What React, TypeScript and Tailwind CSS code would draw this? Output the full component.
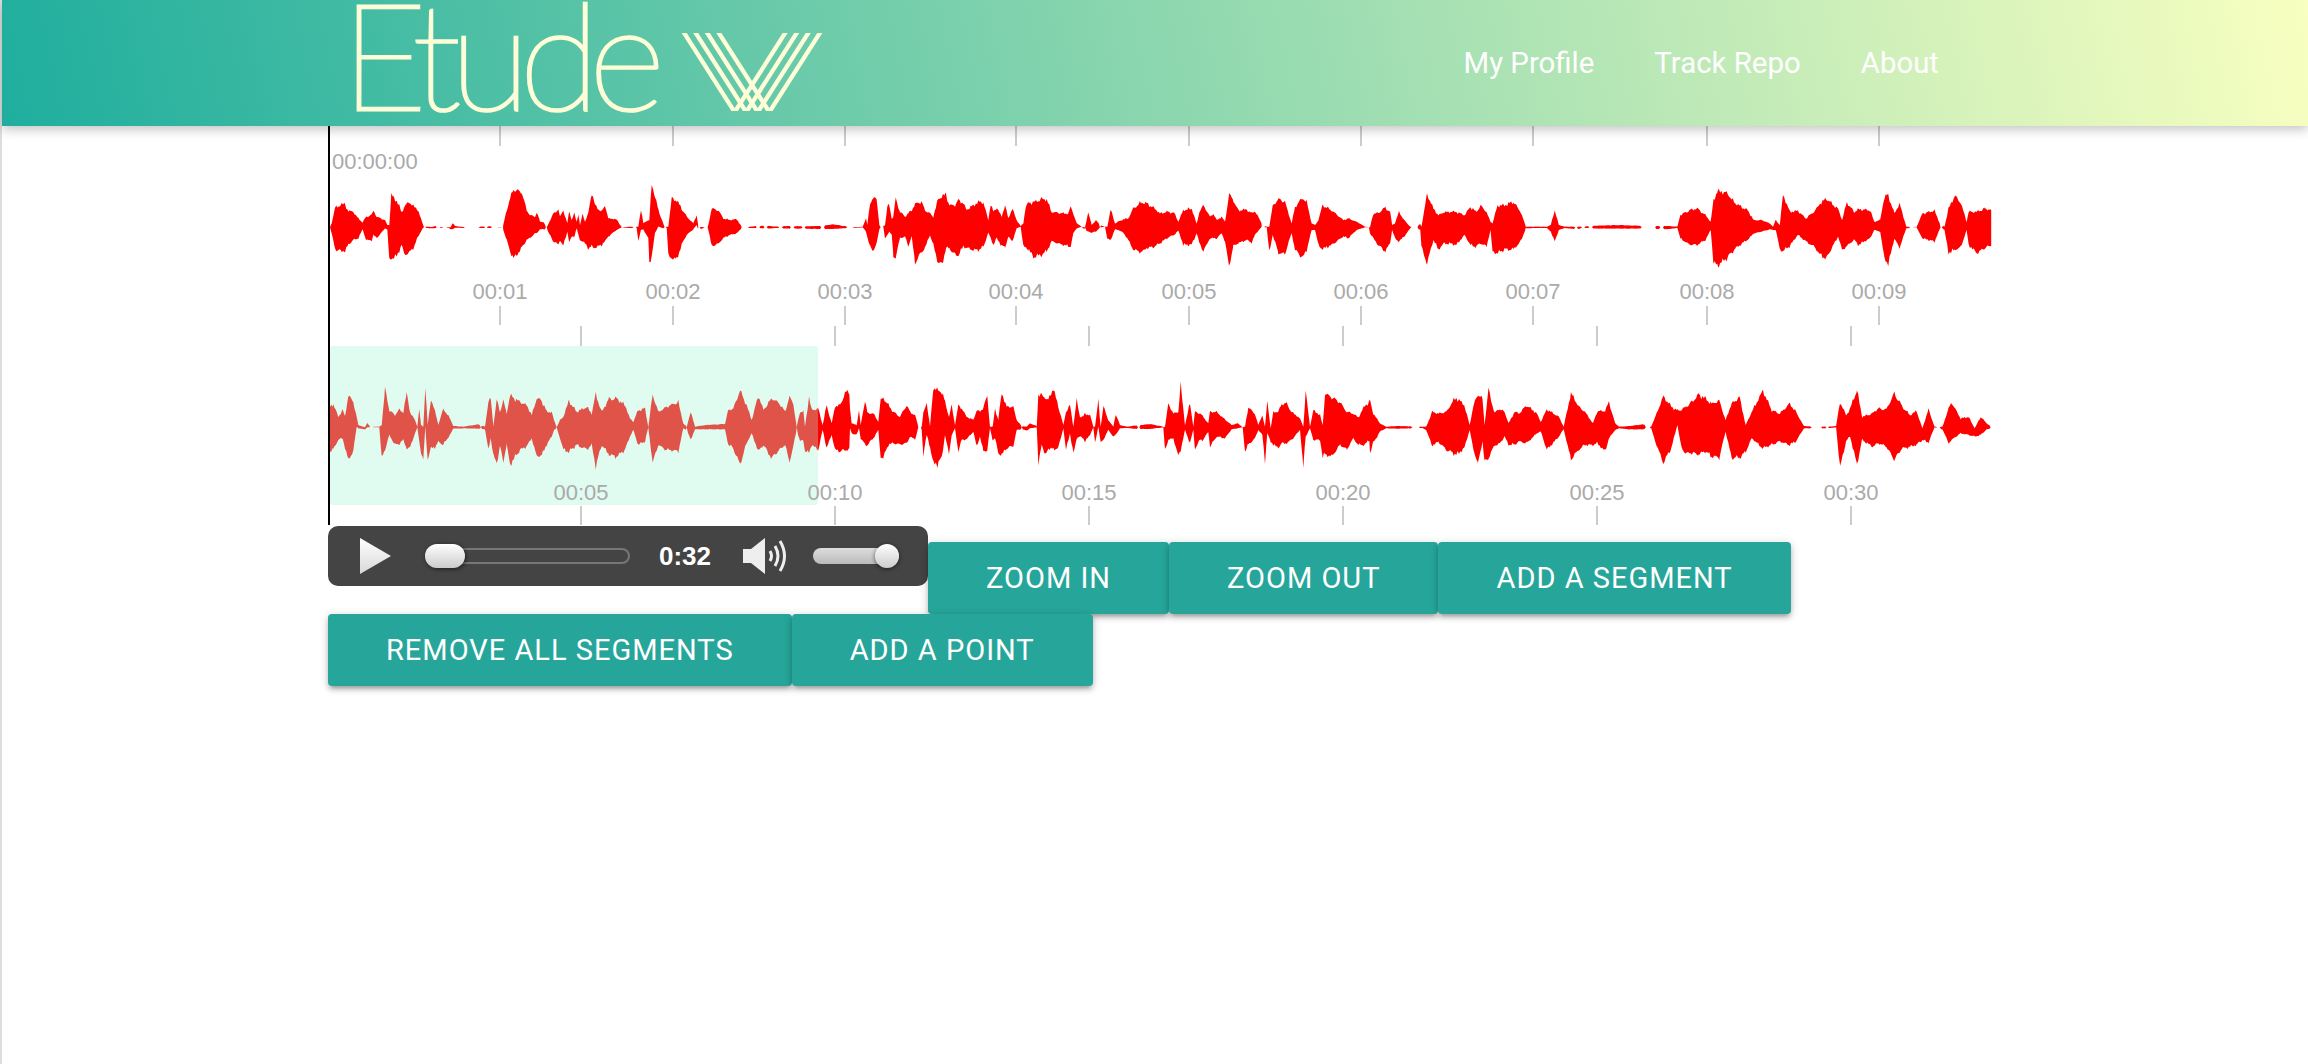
import React from 'react';

// envelope traced from the recording: "x,top,bottom" in crop pixels
const W1A = "0,172,172 5,160,190 15,110,240 22,112,240 35,100,245 45,105,243 55,122,225 70,125,210 85,145,205 98,157,178 108,140,210 125,135,212 130,120,195 140,140,205 165,150,175 172,165,178 178,165,272 184,75,265 200,90,262 215,125,225 222,110,252 238,93,250 250,108,235 262,115,205 278,160,175 290,170,174 305,171,175 320,167,174 332,172,174 355,172,173 362,172,178 368,158,178 375,168,173 400,171,174 405,172,172 445,172,172 450,170,174 470,170,174 490,168,174 500,172,173 515,172,172 520,165,180 530,120,210 540,85,245 550,55,265 558,60,258 575,65,235 590,120,210 600,135,205 615,140,190 620,125,190 630,155,178 640,155,178 650,172,178 670,130,215 685,118,225 690,140,210 700,120,228 712,160,185 718,122,218 725,150,200 733,130,200 740,155,175 745,130,195 750,165,210 758,132,215 765,155,220 775,130,235 785,65,230 795,105,235 815,125,225 825,105,215 835,145,200 860,148,180 875,172,172 895,170,174 920,170,175 925,170,215 933,115,180 940,160,178 955,150,205 958,150,278 965,45,260 975,75,190 985,120,170 1000,160,175 1010,170,175 1015,170,260 1025,85,265 1040,90,270 1055,115,225 1070,140,195 1090,160,178 1100,135,165 1105,170,180 1125,172,172 1135,165,180 1145,115,228 1165,120,222 1180,145,205 1200,150,195 1220,147,190 1235,170,175 1250,171,174 1280,168,174 1310,167,176 1340,170,174 1375,168,176 1420,169,176 1470,168,177 1510,163,177 1540,168,175 1560,170,174";
const W1B = "0,170,172 20,172,174 38,170,172 48,145,185 52,165,200 60,100,230 68,85,245 80,85,220 88,165,178 100,168,170 105,165,208 112,110,195 118,105,185 125,145,195 130,140,260 137,85,262 150,125,205 165,140,200 175,130,230 185,120,200 195,100,280 215,95,245 225,120,235 240,130,195 250,140,225 265,85,280 275,75,288 288,72,235 298,105,235 315,105,255 325,88,258 340,100,230 350,118,235 370,105,240 385,95,240 400,95,232 415,150,188 422,100,205 430,125,225 440,112,205 455,140,228 465,105,235 475,145,200 487,115,215 500,150,175 512,168,170 520,160,230 527,110,235 537,95,240 550,95,262 575,88,255 590,88,245 605,125,215 640,130,225 655,130,230 662,110,230 670,130,190 680,160,175 695,170,170 705,172,180 715,125,185 725,165,188 738,150,185 750,165,172 765,170,170 772,170,208 782,118,210 795,160,178 805,155,180 820,148,188 835,145,210 850,115,240 875,95,248 890,100,235 915,115,230 930,130,220 950,125,205 972,128,195 985,155,182 1000,120,225 1025,115,225 1040,162,190 1048,125,220 1060,105,245 1080,140,205 1090,130,205 1100,150,205 1115,140,190 1125,155,215 1137,72,290 1150,90,230 1165,120,220 1190,118,210 1205,130,218 1215,122,195 1235,160,170 1250,170,172 1258,170,250 1268,108,195 1285,85,250 1305,95,252 1325,160,190 1335,110,240 1358,82,265 1370,95,240 1385,160,180 1395,165,180 1405,150,225 1418,105,238 1445,120,225 1480,150,200 1495,145,205 1520,155,180 1545,170,172 1560,172,172";
const W1C = "0,172,190 8,130,205 20,130,225 38,112,245 50,125,220 55,165,180 62,160,205 72,125,215 85,150,200 100,170,175 115,170,178 125,162,178 128,170,230 142,72,280 158,115,210 170,135,238 185,125,220 215,125,225 235,135,195 250,110,225 265,125,230 275,105,220 290,125,230 300,155,180 305,160,245 318,105,250 335,105,238 357,95,240 375,125,215 388,170,175 410,170,174 440,170,174 450,165,185 460,120,215 470,165,180 485,170,174 515,170,178 530,170,173 560,167,176 620,165,176 660,167,176 700,168,176 740,168,178 765,170,174 772,135,205 795,120,225 815,115,225 835,135,210 848,155,180 855,90,280 865,60,288 890,70,265 910,100,235 940,120,210 955,150,190 975,150,185 995,160,178 1003,170,180 1010,150,180 1020,165,240 1028,72,245 1045,125,228 1065,122,195 1085,145,215 1105,125,230 1120,100,255 1135,85,268 1165,115,200 1175,150,240 1187,95,230 1205,125,210 1215,118,225 1245,120,205 1255,155,180 1270,150,185 1280,80,265 1290,75,285 1305,130,205 1318,100,235 1335,170,175 1360,172,172 1375,130,205 1405,122,215 1420,165,172 1430,170,180 1440,115,250 1455,78,240 1470,95,235 1485,155,180 1490,125,225 1510,125,250 1530,115,235 1548,120,225";
const W2A = "0,110,245 10,100,240 25,140,210 38,120,205 45,140,235 55,75,270 70,95,245 80,140,170 85,165,175 105,172,178 112,158,172 120,170,172 148,170,172 155,165,265 165,52,240 178,120,195 195,135,225 205,118,225 220,125,210 230,68,235 240,125,235 255,150,190 262,170,172 268,115,215 273,165,245 280,170,275 286,45,170 293,165,270 303,85,235 318,135,230 325,165,215 340,115,225 360,145,195 370,168,176 400,170,175 445,163,176 465,170,178 475,95,240 482,85,205 490,170,260 500,90,280 510,125,230 520,90,275 530,130,225 540,75,285 570,95,240 590,105,230 605,135,205 620,85,260 635,90,255 650,125,225 665,125,200 672,150,180 680,172,175 690,150,205 700,140,240 717,92,245 740,125,225 770,110,240 785,130,225 797,72,290 815,125,225 837,85,255 860,85,262 885,105,240 900,145,200 910,155,180 925,120,225 945,115,215 955,172,172 968,72,280 985,125,225 1010,110,240 1045,95,245 1060,160,175 1070,170,180 1082,125,210 1095,170,178 1130,165,178 1185,162,178 1195,120,225 1210,115,235 1230,60,285 1250,105,220 1265,150,190 1285,75,245 1300,120,225 1325,85,265 1345,95,245 1365,125,225 1378,78,278 1390,100,230 1400,170,180 1410,125,215 1420,122,210 1425,170,245 1437,80,250 1445,120,225 1465,115,240 1478,165,180 1490,105,235 1505,160,195 1515,108,240 1530,105,245 1545,70,240 1558,62,240";
const W2B = "0,115,175 5,160,190 20,165,195 27,120,175 32,165,205 45,90,225 52,128,225 70,130,205 85,155,180 92,90,262 100,82,265 115,105,225 130,125,220 150,140,225 170,105,220 180,125,200 195,135,210 205,170,172 215,170,180 220,130,255 230,95,195 240,170,230 250,50,280 262,60,285 275,62,265 285,95,195 297,140,255 305,105,195 315,165,175 325,105,245 335,115,210 350,140,208 370,150,185 380,120,230 390,125,200 400,110,245 412,78,240 420,170,175 428,170,210 435,115,205 445,150,250 455,68,255 470,110,235 490,110,230 500,150,180 515,168,178 530,170,182 540,160,175 560,168,172 565,68,288 575,75,220 585,80,260 595,90,235 610,55,240 625,108,235 640,165,175 648,125,240 660,105,190 670,170,255 680,92,205 690,140,200 700,140,205 705,130,215 720,135,195 730,170,172 735,170,220 745,92,170 752,170,220 760,108,210 775,150,180 790,170,200 797,132,195 810,165,175 830,170,174 860,166,177 900,162,177 940,170,172 945,170,240 955,100,210 970,130,205 985,125,260 992,45,240 1005,165,180 1020,98,220 1030,170,180 1035,125,238 1050,130,210 1060,140,210 1075,160,185 1080,125,230 1100,125,200 1125,148,205 1145,165,178 1162,160,175 1178,170,172 1185,170,245 1195,110,225 1215,132,205 1225,165,180 1237,135,195 1245,170,275 1252,88,190 1262,175,215 1270,125,225 1285,125,235 1295,100,220 1310,100,220 1325,125,210 1350,145,180 1360,170,295 1367,62,200 1380,170,175 1390,120,210 1410,135,210 1418,165,260 1425,70,255 1445,80,260 1470,95,225 1490,125,240 1510,130,205 1525,142,225 1545,105,225 1558,98,210";
const W2C = "0,90,250 8,130,220 25,160,185 40,170,175 70,168,176 130,170,174 140,170,180 155,125,228 170,130,215 190,125,240 205,95,250 215,82,255 235,105,235 248,165,180 258,105,240 268,70,285 280,85,215 285,165,275 295,55,265 310,130,225 320,115,225 335,125,200 345,160,225 360,125,225 370,130,215 390,105,220 415,130,190 425,155,185 440,118,240 470,140,200 482,170,178 500,68,270 520,110,240 535,125,225 555,160,225 565,125,220 585,122,245 595,95,205 610,160,180 620,170,175 645,168,178 680,163,178 700,170,175 710,140,215 730,78,280 750,110,235 765,120,165 775,118,235 785,112,250 805,90,250 818,72,255 835,85,245 850,100,260 870,92,265 885,150,185 900,100,265 920,80,265 935,165,245 950,125,205 978,60,235 1000,120,225 1020,130,215 1045,100,225 1060,125,215 1080,168,175 1110,170,175 1140,170,175 1160,168,172 1170,95,295 1185,135,215 1195,115,200 1212,58,285 1225,140,210 1250,130,230 1265,115,220 1285,118,230 1305,68,270 1325,110,235 1345,135,230 1360,122,225 1375,175,210 1390,118,218 1405,170,172 1425,170,178 1440,115,220 1448,98,210 1470,145,190 1490,140,195 1505,175,200 1520,140,195 1535,160,178 1548,170,175";

const rnd = (n: number) => {
  const v = Math.sin(n * 12.9898) * 43758.5453;
  return v - Math.floor(v);
};

// crop pixels to svg coordinates, resampled with a little roughness so the edge isn't a clean polygon
function wavePath(sections: [string, number, number][], yOffset: number) {
  const pts: number[][] = [];
  for (const [data, xOffset, scale] of sections) {
    for (const item of data.split(' ')) {
      const [x, t, b] = item.split(',').map(Number);
      pts.push([xOffset + x / scale, yOffset + t / 3, yOffset + b / 3]);
    }
  }
  const cy = yOffset + 172 / 3;
  const top: string[] = [];
  const bottom: string[] = [];
  let i = 0;
  for (let s = 0; s < pts.length - 1; s++) {
    const [x0, t0, b0] = pts[s];
    const [x1, t1, b1] = pts[s + 1];
    if (x1 <= x0) continue;
    for (let x = x0; x < x1; x += 1.3) {
      const f = (x - x0) / (x1 - x0);
      const up = cy - (t0 + (t1 - t0) * f);
      const down = b0 + (b1 - b0) * f - cy;
      const wobble = 0.96 + 0.05 * Math.sin(x * 0.9) + 0.04 * Math.sin(x * 2.3 + 1);
      let a = up * (wobble + 0.05 * rnd(i));
      let c = down * (wobble + 0.05 * rnd(i + 0.5));
      // quiet stretches break up into dashes
      if (up + down < 4 && rnd(Math.floor(i / 3)) < 0.3) {
        a = 0;
        c = 0;
      }
      top.push(`${x.toFixed(1)},${(cy - a).toFixed(1)}`);
      bottom.push(`${x.toFixed(1)},${(cy + c).toFixed(1)}`);
      i++;
    }
  }
  return `M${top.join('L')}L${bottom.reverse().join('L')}Z`;
}

const labelFont = { fontFamily: '"Liberation Sans", Arial, sans-serif', fontSize: 22 };

const overviewTicks = [171, 344, 516, 687, 860, 1032, 1204, 1378, 1550];
const zoomTicks = [252, 506, 760, 1014, 1268, 1522];

function Overview() {
  return (
    <svg width={1680} height={199} className="block">
      {overviewTicks.map((x, i) => (
        <g key={x}>
          <rect x={x} y={0} width={2} height={20} fill="#ccc" />
          <rect x={x} y={180} width={2} height={19} fill="#ccc" />
          <text x={x + 1} y={173} textAnchor="middle" fill="#aaa" style={labelFont}>{`00:0${i + 1}`}</text>
        </g>
      ))}
      <text x={4} y={43} fill="#aaa" style={labelFont}>00:00:00</text>
      <path d={wavePath([[W1A, 2, 3], [W1B, 522, 3], [W1C, 1042, 2.489]], 44)} fill="#ff0000" />
      <rect x={0} y={0} width={2} height={199} fill="#000" />
    </svg>
  );
}

function ZoomView() {
  return (
    <svg width={1680} height={200} className="block">
      <path d={wavePath([[W2A, 2, 3], [W2B, 522, 3], [W2C, 1042, 2.489]], 45)} fill="#ff0000" />
      <rect x={2} y={21} width={488} height={159} rx={3} fill="#a5f3d2" fillOpacity={0.34} />
      {zoomTicks.map((x, i) => (
        <g key={x}>
          <rect x={x} y={1} width={2} height={20} fill="#ccc" />
          <rect x={x} y={181} width={2} height={19} fill="#ccc" />
          <text x={x + 1} y={175} textAnchor="middle" fill="#aaa" style={labelFont}>{`00:${String((i + 1) * 5).padStart(2, '0')}`}</text>
        </g>
      ))}
      <rect x={0} y={0} width={2} height={200} fill="#000" />
    </svg>
  );
}

const stripes = [
  [1090, 1240],
  [1125, 1275],
  [1160, 1310],
  [1195, 1345],
  [1500, 1350],
  [1465, 1315],
  [1430, 1280],
  [1395, 1245],
];

function Logo() {
  return (
    <svg width={510} height={126} className="block shrink-0">
      <text
        x={17}
        y={110}
        textLength={324}
        lengthAdjust="spacing"
        fill="#fdfdd8"
        stroke="#fdfdd8"
        strokeWidth={3}
        style={{ fontFamily: 'Lato, sans-serif', fontWeight: 100, fontSize: 148 }}
      >
        Etude
      </text>
      <svg x={356} y={33} width={144} height={78} viewBox="1077 98 436 235">
        {stripes.map(([a, b]) => {
          const d = ((b - a) / 235) * 20;
          return <line key={a} x1={a - d} y1={78} x2={b + d} y2={353} stroke="#fdfdd8" strokeWidth={13} />;
        })}
      </svg>
    </svg>
  );
}

function AudioPlayer() {
  return (
    <div className="flex h-[60px] w-[600px] shrink-0 items-center rounded-[10px] bg-[#444444] pl-8">
      <svg width={31} height={36} viewBox="0 0 31 36" className="shrink-0">
        <defs>
          <linearGradient id="playFill" x1="0" y1="0" x2="0" y2="1">
            <stop offset="0" stopColor="#ffffff" />
            <stop offset="1" stopColor="#d8d8d8" />
          </linearGradient>
        </defs>
        <path d="M0 0L31 18L0 36Z" fill="url(#playFill)" />
      </svg>
      <div className="relative ml-[34px] h-[16px] w-[205px] shrink-0 rounded-full border-2 border-[#777777]">
        <div className="absolute top-[-6px] left-[-2px] h-[24px] w-[40px] rounded-full bg-gradient-to-b from-white to-[#cccccc] shadow-[1px_1px_4px_rgba(0,0,0,0.6)]" />
      </div>
      <span className="ml-[29px] w-[52px] shrink-0 font-['Liberation_Sans',Arial,sans-serif] text-[26px] leading-none font-bold text-white">
        0:32
      </span>
      <svg width={46} height={36} viewBox="0 0 46 36" className="ml-8 shrink-0" fill="none">
        <path d="M0 11H8L22 0V36L8 25H0Z" fill="#eeeeee" />
        <path d="M27 13Q30 18 27 23" stroke="#eeeeee" strokeWidth={3} />
        <path d="M32 8Q38 18 32 28" stroke="#eeeeee" strokeWidth={3} />
        <path d="M37 3Q46 18 37 33" stroke="#eeeeee" strokeWidth={3} />
      </svg>
      <div className="relative ml-6 h-[16px] w-[86px] shrink-0 rounded-full bg-gradient-to-b from-[#dddddd] to-[#bbbbbb]">
        <div className="absolute top-[-4px] right-0 h-[24px] w-[24px] rounded-full bg-gradient-to-b from-white to-[#cccccc] shadow-[0_1px_4px_rgba(0,0,0,0.6)]" />
      </div>
    </div>
  );
}

function Btn({ children }: { children: string }) {
  return (
    <button className="h-[72px] shrink-0 rounded-[4px] bg-[#26a69a] px-[58px] text-[29px] leading-none tracking-[1px] text-white uppercase shadow-[0_4px_4px_0_rgba(0,0,0,0.14),0_6px_2px_-4px_rgba(0,0,0,0.12),0_2px_10px_0_rgba(0,0,0,0.2)]">
      {children}
    </button>
  );
}

export default function App() {
  return (
    <div className="min-h-screen border-l-2 border-[#dddddd] bg-white font-['Roboto',sans-serif]">
      <nav className="relative z-10 flex h-[126px] items-center justify-between bg-[linear-gradient(78deg,#1fae9e,#f8ffc0)] pr-[369px] pl-[322px] shadow-[0_4px_10px_rgba(0,0,0,0.22)]">
        <Logo />
        <ul className="flex gap-[60px] text-[29.4px] text-white">
          <li>My Profile</li>
          <li>Track Repo</li>
          <li>About</li>
        </ul>
      </nav>
      <main className="pl-[326px]">
        <Overview />
        <ZoomView />
        <div className="flex items-start pt-px">
          <AudioPlayer />
          <div className="flex pt-4">
            <Btn>Zoom in</Btn>
            <Btn>Zoom out</Btn>
            <Btn>Add a segment</Btn>
          </div>
        </div>
        <div className="flex">
          <Btn>Remove all segments</Btn>
          <Btn>Add a point</Btn>
        </div>
      </main>
    </div>
  );
}
